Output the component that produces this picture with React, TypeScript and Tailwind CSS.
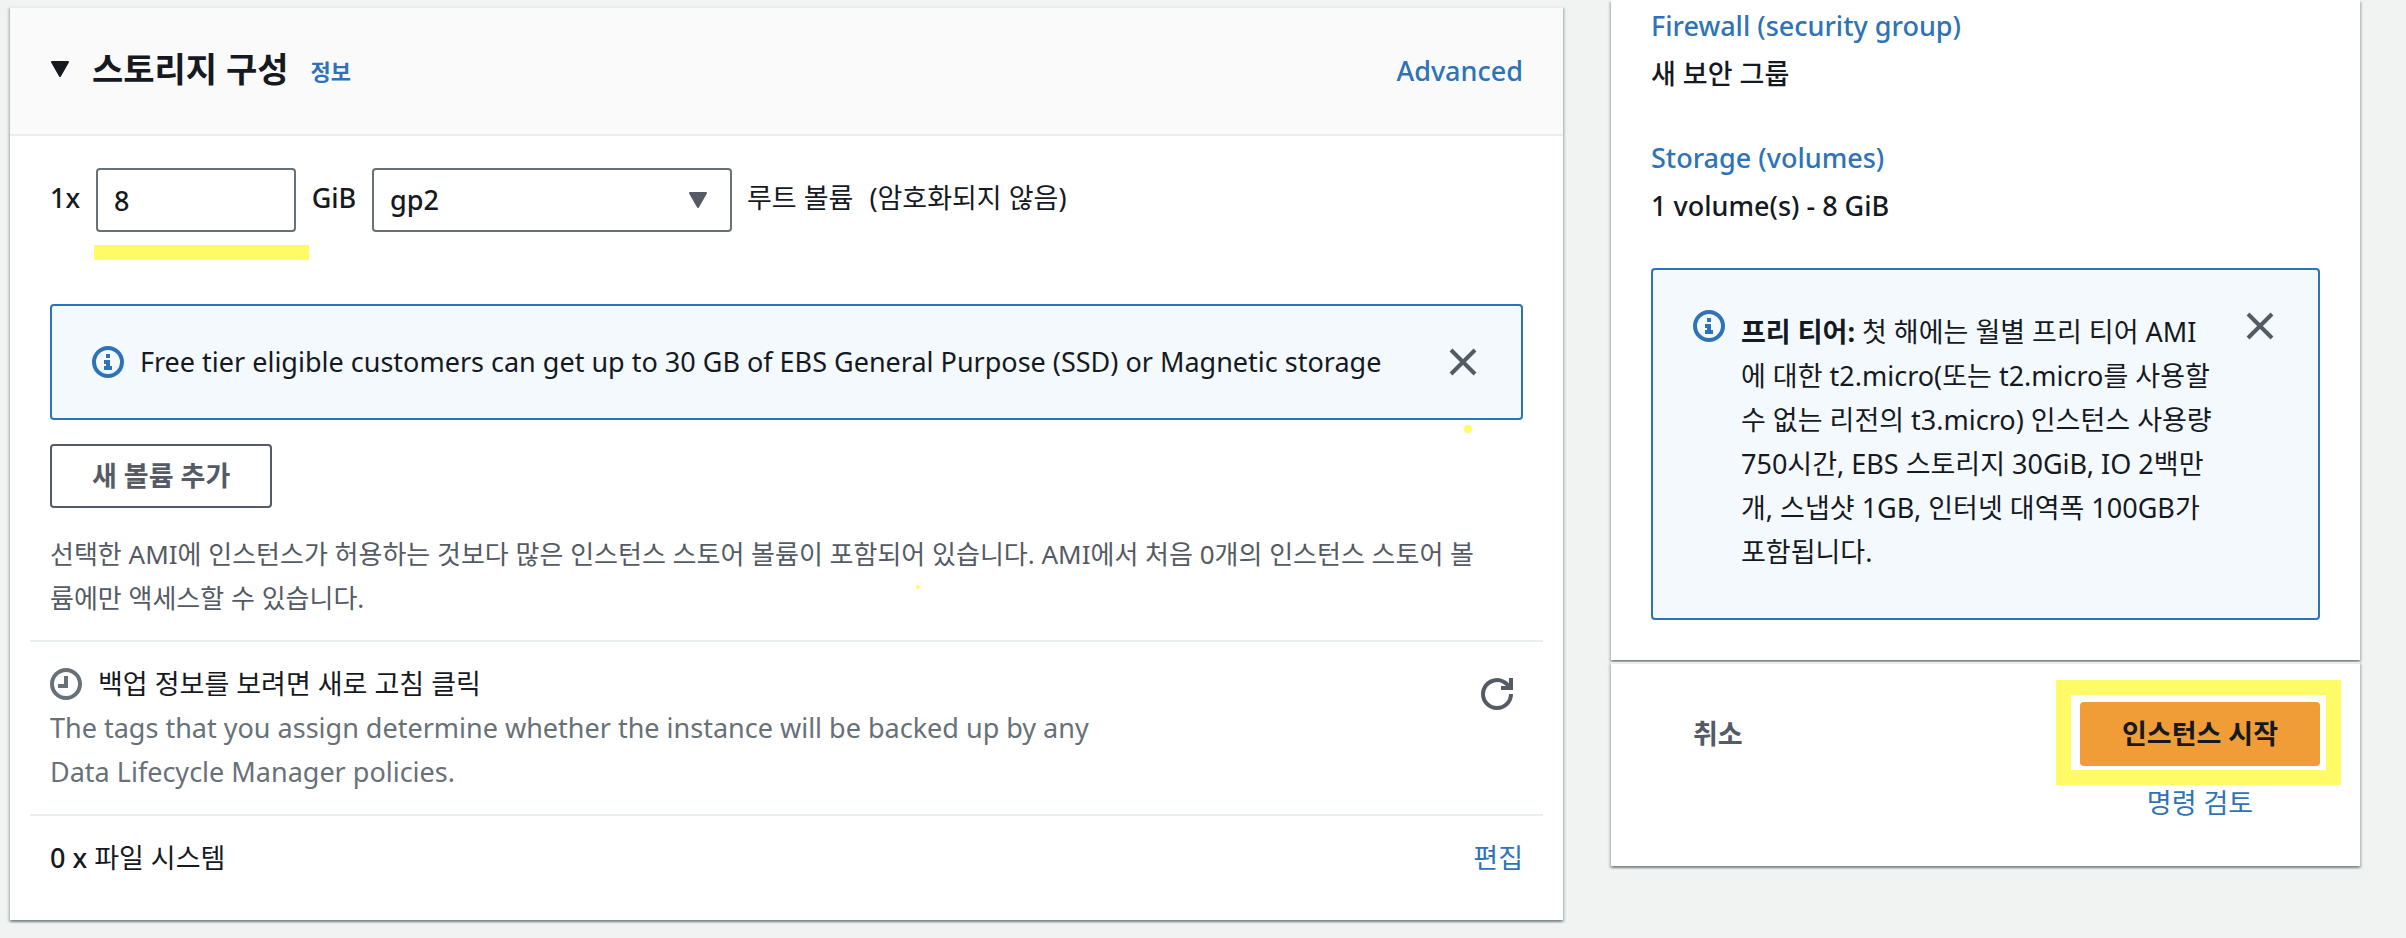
import type { ReactNode } from "react";

const FONT = "font-['Noto_Sans','Noto_Sans_CJK_KR',sans-serif]";
const PANEL_SHADOW =
  "shadow-[0_2px_2px_0_rgba(0,28,36,0.3),2px_2px_2px_0_rgba(0,28,36,0.15),-2px_2px_2px_0_rgba(0,28,36,0.15)]";

function Icon({ children, className }: { children: ReactNode; className: string }) {
  return (
    <svg viewBox="0 0 16 16" fill="none" stroke="currentColor" strokeWidth="2" className={className} aria-hidden="true">
      {children}
    </svg>
  );
}

function InfoIcon() {
  return (
    <Icon className="size-8 shrink-0 text-[#2e73b8]">
      <circle cx="8" cy="8" r="7" />
      <path d="M8 11V8H6M10 11H6M8 6V4" />
    </Icon>
  );
}

function CloseButton() {
  return (
    <button type="button" aria-label="닫기" className="flex size-8 shrink-0 items-center justify-center text-[#545b64]">
      <Icon className="size-8">
        <path d="M2 2l12 12M14 2L2 14" />
      </Icon>
    </button>
  );
}

function SummaryItem({ title, value }: { title: string; value: string }) {
  return (
    <div className="flex flex-col gap-1">
      <a href="#" className="font-medium text-[#2e73b8]">
        {title}
      </a>
      <p className="font-medium">{value}</p>
    </div>
  );
}

function StoragePanel() {
  return (
    <section className={`border-t-2 border-[#eaeded] bg-white ${PANEL_SHADOW}`}>
      <header className="flex h-32 items-center justify-between border-b-2 border-[#eaeded] bg-[#fafafa] px-10">
        <div className="flex items-center pb-1">
          <svg viewBox="0 0 20 16" className="mr-[22px] h-4 w-5" aria-hidden="true">
            <path d="M2 1h16L10 15z" fill="#16191f" stroke="#16191f" strokeWidth="2" strokeLinejoin="round" />
          </svg>
          <h2 className="text-[34px] font-bold">스토리지 구성</h2>
          <a href="#" className="ml-[22px] pt-1 text-[22px] font-bold text-[#2e73b8]">
            정보
          </a>
        </div>
        <a href="#" className="font-medium text-[#2e73b8]">
          Advanced
        </a>
      </header>

      <div className="px-5 pt-8 pb-10">
        <div className="px-5">
          <div className="flex items-center">
            <label htmlFor="size" className="w-[46px] pb-1 font-medium">
              1x
            </label>
            <div className="relative w-[200px]">
              <input
                id="size"
                defaultValue="8"
                className="h-16 w-full rounded-sm border-2 border-[#687078] bg-white px-4 font-medium"
              />
              <span className="absolute top-[77px] -left-0.5 h-[15px] w-[215px] bg-[#fffb66]" />
            </div>
            <label htmlFor="type" className="w-[76px] pb-1 text-center font-medium">
              GiB
            </label>
            <div className="relative w-[360px]">
              <select
                id="type"
                defaultValue="gp2"
                className="h-16 w-full appearance-none rounded-sm border-2 border-[#687078] bg-white px-4 font-medium"
              >
                <option>gp2</option>
                <option>gp3</option>
              </select>
              <svg viewBox="0 0 20 16" className="pointer-events-none absolute top-6 right-6 h-4 w-5" aria-hidden="true">
                <path d="M2 1h16L10 15z" fill="#545b64" stroke="#545b64" strokeWidth="2" strokeLinejoin="round" />
              </svg>
            </div>
            <p className="ml-[15px] flex gap-4 pb-1">
              <span>루트 볼륨</span>
              <span>(암호화되지 않음)</span>
            </p>
          </div>

          <div className="relative mt-[72px] flex items-center rounded-sm border-2 border-[#2e73b8] bg-[#f3f9fd] py-[34px] pr-[42px] pl-10">
            <InfoIcon />
            <p className="ml-4 flex-1 whitespace-nowrap">
              Free tier eligible customers can get up to 30 GB of EBS General Purpose (SSD) or Magnetic storage
            </p>
            <CloseButton />
            <span className="absolute right-[49px] -bottom-[15px] size-2 rounded-full bg-[#fffb66]" />
          </div>

          <button
            type="button"
            className="mt-6 h-16 rounded-sm border-2 border-[#545b64] bg-white px-10 font-bold text-[#545b64]"
          >
            새 볼륨 추가
          </button>

          <p className="relative mt-6 text-[26px] text-[#545b64]">
            선택한 AMI에 인스턴스가 허용하는 것보다 많은 인스턴스 스토어 볼륨이 포함되어 있습니다. AMI에서 처음 0개의 인스턴스 스토어 볼
            <br />
            륨에만 액세스할 수 있습니다.
            <span className="absolute top-[53px] left-[866px] size-1 rounded-full bg-[#fffb66]" />
          </p>
        </div>

        <div className="mt-5 flex items-start justify-between border-y-2 border-[#eaeded] p-5">
          <div>
            <p className="flex items-center gap-4">
              <Icon className="size-8 text-[#687078]">
                <circle cx="8" cy="8" r="7" />
                <path d="M8 4v5H4" />
              </Icon>
              백업 정보를 보려면 새로 고침 클릭
            </p>
            <p className="text-[#687078]">
              The tags that you assign determine whether the instance will be backed up by any
              <br />
              Data Lifecycle Manager policies.
            </p>
          </div>
          <button type="button" aria-label="새로 고침" className="mt-4 mr-2.5 text-[#545b64]">
            <Icon className="size-8">
              <path d="M10 5h5V0M15 8a7 7 0 0 1-14 0 7 7 0 0 1 13.3-3" />
            </Icon>
          </button>
        </div>

        <div className="flex justify-between px-5 pt-5">
          <p>
            <span className="font-medium">0 x</span> 파일 시스템
          </p>
          <a href="#" className="text-[#2e73b8]">
            편집
          </a>
        </div>
      </div>
    </section>
  );
}

function SummaryPanel() {
  return (
    <aside>
      <section className={`bg-white px-10 pt-1 pb-10 ${PANEL_SHADOW}`}>
        <div className="flex flex-col gap-10">
          <SummaryItem title="Firewall (security group)" value="새 보안 그룹" />
          <SummaryItem title="Storage (volumes)" value="1 volume(s) - 8 GiB" />
          <div className="flex items-start rounded-sm border-2 border-[#2e73b8] bg-[#f3f9fd] pt-10 pr-[42px] pb-11 pl-10">
            <InfoIcon />
            <p className="ml-4 flex-1 whitespace-nowrap">
              <b>프리 티어:</b> 첫 해에는 월별 프리 티어 AMI
              <br />
              에 대한 t2.micro(또는 t2.micro를 사용할
              <br />
              수 없는 리전의 t3.micro) 인스턴스 사용량
              <br />
              750시간, EBS 스토리지 30GiB, IO 2백만
              <br />
              개, 스냅샷 1GB, 인터넷 대역폭 100GB가
              <br />
              포함됩니다.
            </p>
            <CloseButton />
          </div>
        </div>
      </section>
      <section
        className={`mt-0.5 flex items-start justify-between border-t-2 border-[#eaeded] bg-white px-10 pt-[38px] pb-[41px] ${PANEL_SHADOW}`}
      >
        <button type="button" className="h-16 px-[42px] font-bold text-[#545b64]">
          취소
        </button>
        <div className="flex flex-col items-center gap-[15px]">
          <div className="relative">
            <button type="button" className="h-16 w-60 rounded-sm bg-[#f09d37] font-bold">
              인스턴스 시작
            </button>
            <span className="pointer-events-none absolute -top-[22px] -right-[21px] -bottom-[19px] -left-6 border-[15px] border-[#fffb66]" />
          </div>
          <a href="#" className="text-[#2e73b8]">
            명령 검토
          </a>
        </div>
      </section>
    </aside>
  );
}

export default function App() {
  return (
    <div className={`min-h-screen bg-[#f1f3f3] text-[27px] leading-[44px] text-[#16191f] ${FONT}`}>
      <main className="grid grid-cols-[minmax(0,1fr)_749px] items-start gap-12 pr-[46px] pl-2.5">
        <div className="pt-1.5">
          <StoragePanel />
        </div>
        <SummaryPanel />
      </main>
    </div>
  );
}
